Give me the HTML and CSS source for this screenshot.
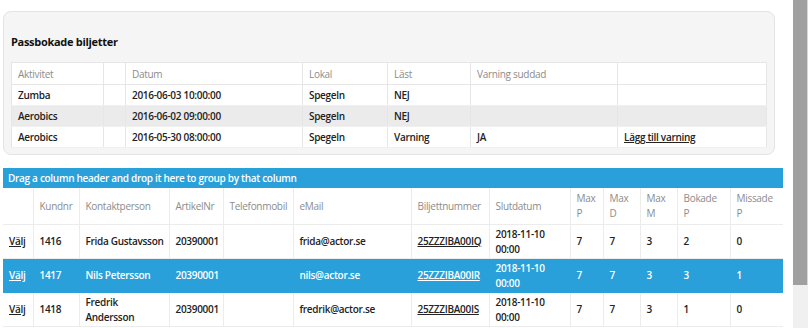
FILE: index.html
```html
<!DOCTYPE html>
<html lang="sv">

<head>
    <meta charset="UTF-8">
    <meta name="viewport" content="width=device-width, initial-scale=1.0">
    <title>Biljetter</title>
    <link rel="stylesheet" href="styles.css">
</head>

<body>
    <div class="page">
        <div class="content">
            <div class="well">
                <h4 class="well-title">Passbokade biljetter</h4>
                <table class="booked">
                    <colgroup>
                        <col style="width: 92px">
                        <col style="width: 22px">
                        <col style="width: 177px">
                        <col style="width: 85px">
                        <col style="width: 83px">
                        <col style="width: 147px">
                        <col>
                    </colgroup>
                    <thead>
                        <tr>
                            <th>Aktivitet</th>
                            <th></th>
                            <th>Datum</th>
                            <th>Lokal</th>
                            <th>Läst</th>
                            <th>Varning suddad</th>
                            <th></th>
                        </tr>
                    </thead>
                    <tbody>
                        <tr>
                            <td>Zumba</td>
                            <td></td>
                            <td>2016-06-03 10:00:00</td>
                            <td>Spegeln</td>
                            <td>NEJ</td>
                            <td></td>
                            <td></td>
                        </tr>
                        <tr class="alt">
                            <td>Aerobics</td>
                            <td></td>
                            <td>2016-06-02 09:00:00</td>
                            <td>Spegeln</td>
                            <td>NEJ</td>
                            <td></td>
                            <td></td>
                        </tr>
                        <tr>
                            <td>Aerobics</td>
                            <td></td>
                            <td>2016-05-30 08:00:00</td>
                            <td>Spegeln</td>
                            <td>Varning</td>
                            <td>JA</td>
                            <td><a href="#">Lägg till varning</a></td>
                        </tr>
                    </tbody>
                </table>
            </div>

            <div class="grid">
                <div class="group-bar">Drag a column header and drop it here to group by that column</div>
                <table class="grid-table">
                    <colgroup>
                        <col style="width: 30px">
                        <col style="width: 46px">
                        <col style="width: 90px">
                        <col style="width: 54px">
                        <col style="width: 70px">
                        <col style="width: 118px">
                        <col style="width: 78px">
                        <col style="width: 81px">
                        <col style="width: 33px">
                        <col style="width: 37px">
                        <col style="width: 37px">
                        <col style="width: 53px">
                        <col style="width: 53px">
                    </colgroup>
                    <thead>
                        <tr>
                            <th></th>
                            <th>Kundnr</th>
                            <th>Kontaktperson</th>
                            <th>ArtikelNr</th>
                            <th>Telefonmobil</th>
                            <th>eMail</th>
                            <th>Biljettnummer</th>
                            <th>Slutdatum</th>
                            <th>Max<br>P</th>
                            <th>Max<br>D</th>
                            <th>Max<br>M</th>
                            <th>Bokade<br>P</th>
                            <th>Missade<br>P</th>
                        </tr>
                    </thead>
                    <tbody>
                        <tr>
                            <td><a href="#">Välj</a></td>
                            <td>1416</td>
                            <td>Frida Gustavsson</td>
                            <td>20390001</td>
                            <td></td>
                            <td>frida@actor.se</td>
                            <td><a href="#">25ZZZIBA00IQ</a></td>
                            <td>2018-11-10<br>00:00</td>
                            <td>7</td>
                            <td>7</td>
                            <td>3</td>
                            <td>2</td>
                            <td>0</td>
                        </tr>
                        <tr class="selected">
                            <td><a href="#">Välj</a></td>
                            <td>1417</td>
                            <td>Nils Petersson</td>
                            <td>20390001</td>
                            <td></td>
                            <td>nils@actor.se</td>
                            <td><a href="#">25ZZZIBA00IR</a></td>
                            <td>2018-11-10<br>00:00</td>
                            <td>7</td>
                            <td>7</td>
                            <td>3</td>
                            <td>3</td>
                            <td>1</td>
                        </tr>
                        <tr>
                            <td><a href="#">Välj</a></td>
                            <td>1418</td>
                            <td>Fredrik Andersson</td>
                            <td>20390001</td>
                            <td></td>
                            <td>fredrik@actor.se</td>
                            <td><a href="#">25ZZZIBA00IS</a></td>
                            <td>2018-11-10<br>00:00</td>
                            <td>7</td>
                            <td>7</td>
                            <td>3</td>
                            <td>1</td>
                            <td>0</td>
                        </tr>
                    </tbody>
                </table>
            </div>
        </div>

        <div class="scrollbar">
            <div class="scrollbar-thumb"></div>
        </div>
    </div>
</body>

</html>
```

FILE: styles.css
```css
body {
    font-family: "Open Sans", "Noto Sans", sans-serif;
    font-size: 10px;
    letter-spacing: -0.3px;
    color: #222;
    margin: 0;
    padding: 0;
    background-color: #fff;
}

.page {
    display: flex;
    height: 328px;
    overflow: hidden;
}

.content {
    flex: 1;
    padding: 11px 10px 0 3px;
}

.scrollbar {
    width: 15px;
    background-color: #f0f0f0;
}

.scrollbar-thumb {
    height: 285px;
    background-color: #a0a0a0;
    border-right: 1px solid #d8d8d8;
}

/* panel with booked tickets */
.well {
    width: 772px;
    height: 144px;
    box-sizing: border-box;
    background-color: #f5f5f5;
    border: 1px solid #e3e3e3;
    border-radius: 8px;
    padding: 0 7px;
}

.well-title {
    font-size: 11px;
    font-weight: 700;
    color: #111;
    margin: 22px 0 13px 0;
    line-height: 15px;
}

.booked {
    width: 756px;
    table-layout: fixed;
    border-collapse: collapse;
    background-color: #fff;
    border: 1px solid #e6e6e6;
}

.booked th,
.booked td {
    text-align: left;
    padding: 0 6px;
    border-left: 1px solid #e6e6e6;
    white-space: nowrap;
}

.booked th {
    font-weight: 400;
    color: #8c8c8c;
    height: 21px;
    border-bottom: 1px solid #e6e6e6;
}

.booked td {
    font-weight: 600;
    height: 20px;
    border-bottom: 1px solid #f0f0f0;
}

.booked tr.alt td {
    background-color: #ebebeb;
}

.booked a {
    color: #222;
}

/* grid */
.grid {
    width: 780px;
    margin-top: 13px;
}

.group-bar {
    background-color: #29a0da;
    color: #fff;
    font-weight: 600;
    height: 20px;
    line-height: 20px;
    padding-left: 5px;
}

.grid-table {
    width: 780px;
    table-layout: fixed;
    border-collapse: collapse;
}

.grid-table th,
.grid-table td {
    text-align: left;
    padding: 0 2px 0 6px;
    border-left: 1px solid #ececec;
    border-bottom: 1px solid #ececec;
    line-height: 15px;
}

.grid-table th:first-child,
.grid-table td:first-child {
    border-left: none;
}

.grid-table th {
    font-weight: 400;
    color: #8c8c8c;
    height: 36px;
}

.grid-table td {
    font-weight: 600;
    height: 33px;
}

.grid-table a {
    color: #222;
}

.grid-table tr.selected td {
    background-color: #29a0da;
    color: #fff;
    border-color: #29a0da;
}

.grid-table tr.selected a {
    color: #fff;
}
```
